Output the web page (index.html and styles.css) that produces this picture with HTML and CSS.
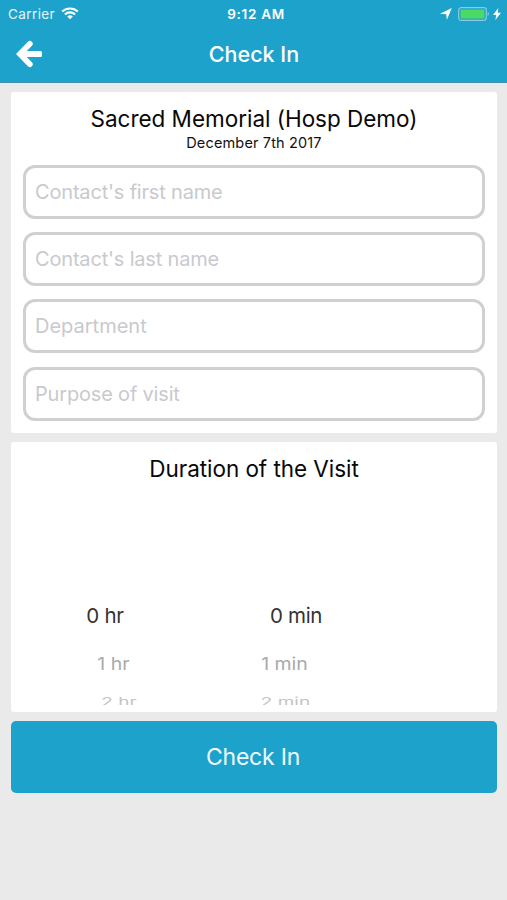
FILE: index.html
```html
<!DOCTYPE html>
<html lang="en">
<head>
<meta charset="utf-8">
<title>Check In</title>
<link rel="stylesheet" href="styles.css">
</head>
<body>
<header class="header">
  <div class="status">
    <div class="status-left">
      <span class="carrier">Carrier</span>
      <svg class="wifi" width="18" height="13" viewBox="0 0 18 13" fill="none" stroke="#fff" stroke-width="2.1"><path d="M1.2 4.6a11.2 11.2 0 0 1 15.6 0M3.9 7.5a7.3 7.3 0 0 1 10.2 0"/><path d="M9 12.3 6.2 9.6a4 4 0 0 1 5.6 0z" fill="#fff" stroke="none"/></svg>
    </div>
    <span class="clock">9:12 AM</span>
    <div class="status-right">
      <svg width="12" height="12" viewBox="0 0 12 12" fill="#fff"><path d="M11.8 0 6.9 11.8 6.2 6.2 0 5.8z"/></svg>
      <svg class="battery" width="32" height="14" viewBox="0 0 32 14"><rect x=".7" y=".7" width="27.6" height="12.6" rx="2.5" fill="none" stroke="#8bcbe3" stroke-width="1.2"/><rect x="2.6" y="2.6" width="23.8" height="8.8" rx="1" fill="#4cd964"/><path d="M29.6 5a2.2 2.2 0 0 1 0 4z" fill="#8bcbe3"/></svg>
      <svg width="8" height="12" viewBox="0 0 8 12" fill="#fff"><path d="M5.3 0 0 6.9h3.2L2.4 12 8 4.8H4.7z"/></svg>
    </div>
  </div>
  <nav class="nav">
    <svg class="back" width="27" height="28" viewBox="0 0 27 28" fill="none" stroke="#fff"><path d="M13.9 3.8 3.9 14l10 10.2" stroke-width="5.6" stroke-linecap="round"/><rect x="5" y="11" width="21" height="6" rx="1.5" fill="#fff" stroke="none"/></svg>
    <h1 class="title">Check In</h1>
  </nav>
</header>
<main class="content">
  <section class="card visit">
    <h2 class="heading place">Sacred Memorial (Hosp Demo)</h2>
    <p class="date">December 7th 2017</p>
    <div class="fields">
      <div class="field"><span class="f1">Contact's first name</span></div>
      <div class="field"><span class="f2">Contact's last name</span></div>
      <div class="field"><span class="f3">Department</span></div>
      <div class="field"><span class="f4">Purpose of visit</span></div>
    </div>
  </section>
  <section class="card duration">
    <h2 class="heading dur-title">Duration of the Visit</h2>
    <div class="picker">
      <div class="wheel hours">
        <div class="row row0"><span>0 hr</span></div>
        <div class="row row1"><span>1 hr</span></div>
        <div class="row row2"><span>2 hr</span></div>
      </div>
      <div class="wheel minutes">
        <div class="row row0"><span>0 min</span></div>
        <div class="row row1"><span>1 min</span></div>
        <div class="row row2"><span>2 min</span></div>
      </div>
    </div>
  </section>
  <button class="submit" type="button">Check In</button>
</main>
</body>
</html>
```
FILE: styles.css
```css
* { box-sizing: border-box; }
body {
  margin: 0;
  height: 900px;
  overflow: hidden;
  background: #eaeaeb;
  font-family: Inter, "Liberation Sans", sans-serif;
  color: #111;
}
h1, h2, p { margin: 0; font-weight: 400; white-space: nowrap; }
.header {
  height: 83px;
  background: #1da3cb;
  border-bottom: 1px solid #3f93ae;
  color: #fff;
}
.status {
  height: 27px;
  display: grid;
  grid-template-columns: 1fr auto 1fr;
  align-items: center;
  padding: 0 6px 0 8px;
  font-size: 13px;
}
.status-left, .status-right { display: flex; align-items: center; }
.status-left { gap: 6px; color: #e4f5fb; }
.carrier { font-size: 13.5px; letter-spacing: .4px; }
.clock { padding-left: 3px; font-size: 13.5px; font-weight: 600; letter-spacing: .7px; }
.status-right { justify-content: flex-end; gap: 6px; }
.battery { margin: 0 -3px 0 0; }
.nav {
  height: 55px;
  display: grid;
  grid-template-columns: 27px 1fr 27px;
  align-items: center;
  padding: 0 15px 1px 16px;
}
.title { text-align: center; font-size: 21.5px; font-weight: 500; }
.content {
  display: flex;
  flex-direction: column;
  gap: 9px;
  padding: 9px 10px 0 11px;
}
.card { background: #fff; border-radius: 3px; overflow: hidden; }
.visit { height: 341px; padding: 12px 12px 0; }
.heading { font-size: 22.5px; line-height: 30px; text-align: center; color: #080808; }
.place { letter-spacing: -.02px; }
.dur-title { letter-spacing: -.05px; }
.date { font-size: 14.5px; line-height: 18px; text-align: center; letter-spacing: .15px; }
.fields { display: grid; grid-auto-rows: 54px; row-gap: 13.2px; margin-top: 13px; }
.field {
  display: flex;
  align-items: center;
  border: 3px solid #d0d0d1;
  border-radius: 12px;
  padding-left: 9px;
  font-size: 20px;
  color: #c9c9ce;
}
.f1, .f2, .f4 { letter-spacing: -.18px; }
.duration { height: 269.5px; padding-top: 12px; }
.picker { display: flex; height: 221px; overflow: hidden; padding: 113px 0 0; }
.wheel { display: flex; flex-direction: column; align-items: center; }
.hours { width: 188px; }
.minutes { width: 194px; }
.row { display: flex; flex-shrink: 0; align-items: center; justify-content: center; width: 100%; white-space: nowrap; }
.row span { transform-origin: center; }
.row0 { height: 37px; font-size: 20.5px; color: #333; letter-spacing: -.3px; }
.row1 { height: 60px; font-size: 19.5px; color: #aaa; }
.row2 { height: 16px; font-size: 19px; color: #c4c4c4; }
.row1 span { transform: scaleY(.9); }
.row2 span { transform: translateY(-1px) scaleY(.65); }
.hours .row1 { padding-left: 17px; }
.hours .row2 { padding-left: 28px; }
.minutes .row1 { padding-right: 23px; }
.minutes .row2 { padding-right: 21px; }
.submit {
  height: 72px;
  margin: 0;
  padding: 0 2px 0 0;
  border: 0;
  border-radius: 5px;
  background: #1da3cb;
  color: #f1fbff;
  font: 400 23px Inter, "Liberation Sans", sans-serif;
  letter-spacing: -.2px;
}
```
